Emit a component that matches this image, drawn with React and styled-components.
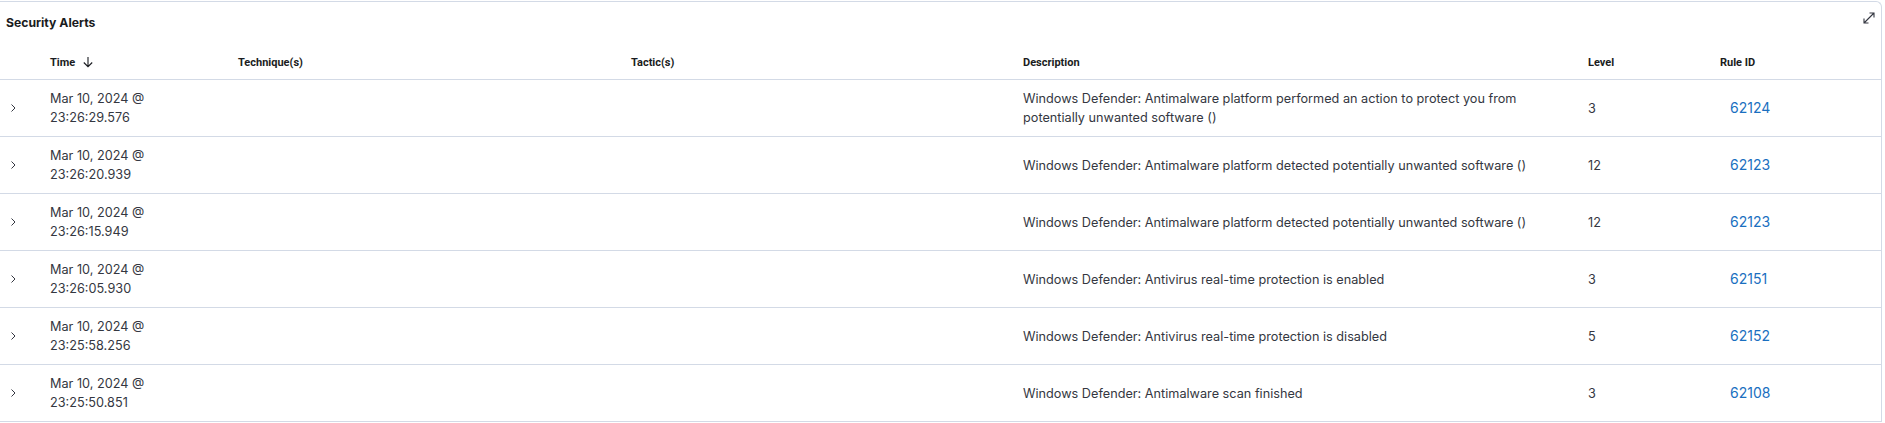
import styled, { createGlobalStyle } from 'styled-components';

const Global = createGlobalStyle`
    body {
        margin: 0;
        background: #fff;
        font-family: Inter, "Noto Sans", sans-serif;
        color: #343741;
    }
`
const Panel = styled.section`
    margin-top: 1px;
    width: 1881px;
    border: 1px solid #d3dae6;
    border-left: none;
    border-bottom: none;
    border-top-right-radius: 6px;
    background: #fff;
`
const TitleBar = styled.div`
    display: flex;
    justify-content: space-between;
    align-items: flex-start;
    height: 41px;
`
const Title = styled.h2`
    margin: 0;
    padding: 13px 0 0 6px;
    font-size: 12.2px;
    font-weight: 700;
    line-height: 16px;
    color: #1a1c21;
`
const IconButton = styled.button`
    border: none;
    background: none;
    padding: 0;
    margin: 8px 4px 0 0;
    width: 16px;
    height: 16px;
    color: #343741;
    display: flex;
    align-items: center;
    justify-content: center;
`
const Row = styled.div`
    display: grid;
    grid-template-columns: 42px 188px 393px 392px 565px 132px 1fr;
    align-items: center;
    height: ${p => p.$head ? '37px' : '57px'};
    box-sizing: border-box;
    border-bottom: 1px solid #d3dae6;
`
const HeadCell = styled.div`
    padding-left: 8px;
    font-family: Roboto, "Liberation Sans", sans-serif;
    font-size: 11px;
    font-weight: 700;
    color: #1a1c21;
    display: flex;
    align-items: center;
    gap: 7px;
    padding-top: 2px;
`
const Cell = styled.div`
    padding: 0 8px;
    font-size: 12.7px;
    line-height: 19px;
    color: #343741;
`
const Expander = styled.div`
    display: flex;
    align-items: center;
    padding-left: 9px;
    color: #343741;
`
const RuleLink = styled.a`
    padding-left: 10px;
    font-size: 14px;
    color: #1a6fc0;
    text-decoration: none;
`

const alerts = [
    { date: 'Mar 10, 2024 @', time: '23:26:29.576', desc: 'Windows Defender: Antimalware platform performed an action to protect you from potentially unwanted software ()', level: 3, rule: '62124' },
    { date: 'Mar 10, 2024 @', time: '23:26:20.939', desc: 'Windows Defender: Antimalware platform detected potentially unwanted software ()', level: 12, rule: '62123' },
    { date: 'Mar 10, 2024 @', time: '23:26:15.949', desc: 'Windows Defender: Antimalware platform detected potentially unwanted software ()', level: 12, rule: '62123' },
    { date: 'Mar 10, 2024 @', time: '23:26:05.930', desc: 'Windows Defender: Antivirus real-time protection is enabled', level: 3, rule: '62151' },
    { date: 'Mar 10, 2024 @', time: '23:25:58.256', desc: 'Windows Defender: Antivirus real-time protection is disabled', level: 5, rule: '62152' },
    { date: 'Mar 10, 2024 @', time: '23:25:50.851', desc: 'Windows Defender: Antimalware scan finished', level: 3, rule: '62108' },
]

const Chevron = () => (
    <svg width="8" height="10" viewBox="0 0 8 10" fill="none" stroke="currentColor" strokeWidth="1">
        <path d="M2.5 1.5 L6 5 L2.5 8.5" />
    </svg>
)

const SortArrow = () => (
    <svg width="12" height="12" viewBox="0 0 12 12" fill="none" stroke="currentColor" strokeWidth="1.1">
        <path d="M6 1 V10.5 M1.8 6.5 L6 10.7 L10.2 6.5" />
    </svg>
)

const ExpandIcon = () => (
    <svg width="14" height="14" viewBox="0 0 14 14" fill="none" stroke="currentColor" strokeWidth="1.1">
        <path d="M2 12 L12 2 M7.5 2 H12 V6.5 M2 7.5 V12 H6.5" />
    </svg>
)

const App = () => {
    return (
        <>
            <Global />
            <Panel>
                <TitleBar>
                    <Title>Security Alerts</Title>
                    <IconButton aria-label="Expand"><ExpandIcon /></IconButton>
                </TitleBar>
                <Row $head>
                    <HeadCell />
                    <HeadCell>Time <SortArrow /></HeadCell>
                    <HeadCell>Technique(s)</HeadCell>
                    <HeadCell>Tactic(s)</HeadCell>
                    <HeadCell>Description</HeadCell>
                    <HeadCell>Level</HeadCell>
                    <HeadCell>Rule ID</HeadCell>
                </Row>
                {alerts.map((a, i) => (
                    <Row key={i}>
                        <Expander><Chevron /></Expander>
                        <Cell>{a.date}<br />{a.time}</Cell>
                        <Cell />
                        <Cell />
                        <Cell>{a.desc}</Cell>
                        <Cell>{a.level}</Cell>
                        <Cell><RuleLink href="#">{a.rule}</RuleLink></Cell>
                    </Row>
                ))}
            </Panel>
        </>
    )
}

export default App;
